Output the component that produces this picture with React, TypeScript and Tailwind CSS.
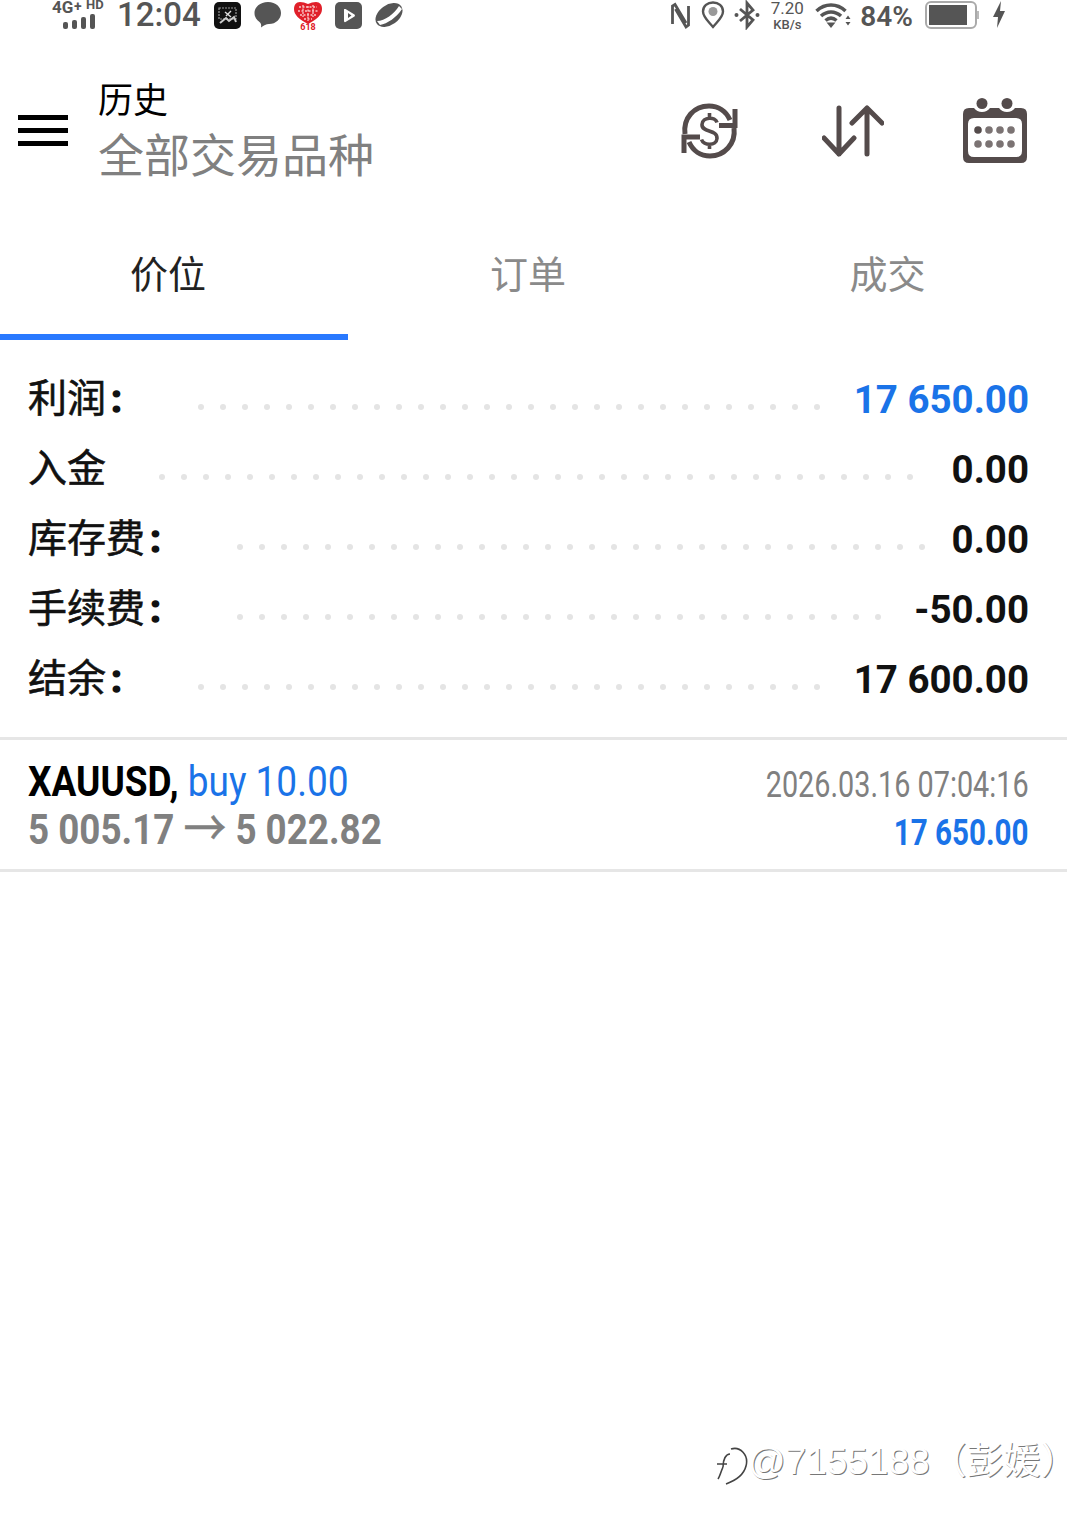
import React from "react";

const cjk = "font-['Roboto','Noto_Sans_CJK_SC',sans-serif]";

const rows = [
  { label: "利润", colon: true, dots: 29, value: "17 650.00", valueCls: "text-[#1a73e8]", label_w: "w-[145px]" },
  { label: "入金", colon: false, dots: 35, value: "0.00", valueCls: "text-[#111]", label_w: "w-[106px]" },
  { label: "库存费", colon: true, dots: 32, value: "0.00", valueCls: "text-[#111]", label_w: "w-[184px]" },
  { label: "手续费", colon: true, dots: 30, value: "-50.00", valueCls: "text-[#111]", label_w: "w-[184px]" },
  { label: "结余", colon: true, dots: 29, value: "17 600.00", valueCls: "text-[#111]", label_w: "w-[145px]" },
];

function StatusLeft() {
  return (
    <div className="flex items-center">
      <div className="relative w-[54px] h-[30px] ml-[52px]">
        <span className="absolute left-0 top-0 text-[17px] leading-[14px] font-bold text-[#555] font-['Roboto',sans-serif]">4G</span>
        <span className="absolute left-[22px] top-0 text-[14px] leading-[12px] font-bold text-[#555] font-['Roboto',sans-serif]">+</span>
        <span className="absolute left-[34px] top-0 text-[13px] leading-[10px] font-bold text-[#555] font-['Roboto',sans-serif]">HD</span>
        <svg className="absolute left-[10px] top-[13px]" width="36" height="17" viewBox="0 0 36 17">
          <rect x="1" y="9" width="5" height="7" rx="2" fill="#555" />
          <rect x="10" y="7" width="5" height="9" rx="2" fill="#555" />
          <rect x="19" y="4" width="5" height="12" rx="2" fill="#555" />
          <rect x="28" y="1" width="5" height="15" rx="2" fill="#555" />
        </svg>
      </div>
      <span className="ml-[11px] text-[33px] leading-[30px] font-medium text-[#555] font-['Roboto',sans-serif]">12:04</span>
      <svg className="ml-[13px]" width="27" height="27" viewBox="0 0 27 27">
        <rect width="27" height="27" rx="5" fill="#111" />
        <rect x="5" y="6" width="17" height="11" fill="none" stroke="#999" strokeWidth="1.2" strokeDasharray="2 1" />
        <path d="M6 21 L12 16 L15 19 L20 15 L22 20" stroke="#ccc" strokeWidth="2" fill="none" />
        <path d="M11 10 L17 15 M17 9 L12 14" stroke="#ddd" strokeWidth="1.4" />
      </svg>
      <svg className="ml-[12px]" width="30" height="28" viewBox="0 0 30 28">
        <path d="M15 1 C23 1 28 6 28 12 C28 18 23 23 16 23 C13 23 11 24.500 8 26.500 C8.500 24 8 22 6.500 21 C3.500 19 1.500 16 1.500 12 C1.500 6 7 1 15 1Z" fill="#555" />
      </svg>
      <svg className="ml-[10px]" width="30" height="29" viewBox="0 0 30 29">
        <path d="M7 1 Q11 1 15 3 Q19 1 23 1 C27 1 29 4 29 8 C29 14 24 18 15 23 C6 18 1 14 1 8 C1 4 3 1 7 1Z" fill="#e0202a" />
        <path d="M6 6 H24 M5 10 H25 M7 14 H23 M11 18 H19 M10 4 V16 M15 5 V20 M20 4 V16" stroke="#f8c8c8" strokeWidth="1.300" strokeDasharray="2 1.500" />
        <text x="15" y="29" textAnchor="middle" fontSize="9" fontWeight="700" fill="#e0202a" fontFamily="Roboto">618</text>
      </svg>
      <svg className="ml-[12px]" width="27" height="27" viewBox="0 0 27 27">
        <rect width="27" height="27" rx="5" fill="#555" />
        <path d="M9.500 7 Q9 6.500 9 8 V19 Q9 20.500 10.500 20 L19.500 14.500 Q20.500 13.500 19.500 12.500 L10.500 7 Z M13 11 L16.500 13.500 L13 16 Z" fill="#fff" fillRule="evenodd" />
      </svg>
      <svg className="ml-[13px]" width="28" height="26" viewBox="0 0 28 26">
        <ellipse cx="14" cy="13" rx="15" ry="10" transform="rotate(-36 14 13)" fill="#555" />
        <path d="M2 19 C10 19 19 12 24 4 L27 7 C22 15 12 22 5 23 Z" fill="#fff" />
      </svg>
    </div>
  );
}

function StatusRight() {
  return (
    <div className="flex items-center mr-[60px]">
      <svg width="22" height="30" viewBox="0 0 22 30">
        <path d="M2.500 24 V6 L5 4.500 L16 23" stroke="#555" strokeWidth="2.800" fill="none" />
        <path d="M18.500 6 V25 L16 27 L5.500 9" stroke="#555" strokeWidth="2.800" fill="none" />
      </svg>
      <svg className="ml-[9px]" width="24" height="30" viewBox="0 0 24 30">
        <path d="M12 27 C7 21 2 17 2 11.500 C2 6 6.500 2.500 12 2.500 C17.500 2.500 22 6 22 11.500 C22 17 17 21 12 27Z" fill="none" stroke="#555" strokeWidth="2.400" />
        <circle cx="12" cy="11.500" r="4.500" fill="#999" />
      </svg>
      <svg className="ml-[9px]" width="26" height="30" viewBox="0 0 26 30">
        <path d="M6 9 L19 20 L13 27 V3 L19 10 L6 21" fill="none" stroke="#555" strokeWidth="2.800" />
        <circle cx="2.500" cy="15" r="2" fill="#555" />
        <circle cx="23.500" cy="15" r="2" fill="#555" />
      </svg>
      <div className="ml-[10px] w-[34px] flex flex-col items-center text-[#555] font-['Roboto',sans-serif]">
        <span className="text-[17px] leading-[17px]">7.20</span>
        <span className="text-[13px] leading-[13px] mt-[1px] font-medium">KB/s</span>
      </div>
      <svg className="ml-[11px]" width="36" height="30" viewBox="0 0 36 30">
        <path d="M1.500 11 C10 3 22 3 30.500 11 M6 16 C12 10.500 20 10.500 26 16 M10.500 20.500 C14 17.500 18 17.500 21.500 20.500" stroke="#555" strokeWidth="3.500" fill="none" />
        <path d="M11.500 22.500 H20.500 L16 28 Z" fill="#555" />
        <path d="M30.500 19 L33 15.500 L35.500 19 Z M30.500 22 H35.500 L33 25.500 Z" fill="#555" />
      </svg>
      <span className="ml-[9px] text-[28px] leading-[30px] font-semibold text-[#555] font-['Roboto',sans-serif] mt-[3px]">84%</span>
      <svg className="ml-[12px]" width="55" height="30" viewBox="0 0 55 30">
        <rect x="1" y="2" width="50" height="26" rx="5" fill="none" stroke="#aaa" strokeWidth="2" />
        <rect x="4" y="5" width="38" height="20" fill="#555" />
        <rect x="52" y="11" width="2" height="8" fill="#bbb" />
      </svg>
      <svg className="ml-[12px]" width="15" height="30" viewBox="0 0 15 30">
        <path d="M9 1 L1 17 H6 L5 28 L13 11 H8 Z" fill="#555" />
      </svg>
    </div>
  );
}

function ExchangeIcon() {
  return (
    <svg className="block -mt-[5px]" width="60" height="60" viewBox="0 0 60 60">
      <path d="M6 33 C4 17 15 5 30 5 C39 5 47 10 51 19" fill="none" stroke="#544b4b" strokeWidth="5" />
      <path d="M55 27 C57 43 45 55 31 55 C22 55 14 50 10 41" fill="none" stroke="#544b4b" strokeWidth="5" />
      <path d="M56 8 V24.500 H40" fill="none" stroke="#544b4b" strokeWidth="5" />
      <path d="M5 52 V36 H21" fill="none" stroke="#544b4b" strokeWidth="5" />
      <path d="M38 21.500 C36.500 15.500 23.500 15.500 23 23.500 C22.500 32 38.500 28 38 37.500 C37.500 45 24.500 45 22.500 38.500 M30.500 12 V17.500 M30.500 42.500 V48" fill="none" stroke="#544b4b" strokeWidth="3.600" />
    </svg>
  );
}

function SortIcon() {
  return (
    <svg className="block -mt-[2px]" width="62" height="54" viewBox="0 0 62 54">
      <path d="M17 4 V50 M2 34 L17 50 L32 34" fill="none" stroke="#544b4b" strokeWidth="5" strokeLinecap="round" strokeLinejoin="round" />
      <path d="M45 50 V4 M30 19 L45 4 L60 19" fill="none" stroke="#544b4b" strokeWidth="5" strokeLinecap="round" strokeLinejoin="round" />
    </svg>
  );
}

function CalendarIcon() {
  return (
    <svg className="block -mt-[8px]" width="64" height="65" viewBox="0 0 64 65">
      <path fillRule="evenodd" d="M6 10 H11 Q14 14 19 14 Q24 14 27 10 H36 Q39 14 44 14 Q49 14 52 10 H58 Q64 10 64 16 V59 Q64 65 58 65 H6 Q0 65 0 59 V16 Q0 10 6 10 Z M11 20 Q5 20 5 26 V53 Q5 59 11 59 H53 Q59 59 59 53 V26 Q59 20 53 20 Z" fill="#544b4b" />
      <circle cx="19" cy="5.500" r="5.500" fill="#544b4b" />
      <circle cx="44" cy="5.500" r="5.500" fill="#544b4b" />
      {[15, 26, 37, 48].map((x, i) => <circle key={x} cx={x} cy="32" r="3.800" fill={i === 0 ? "#544b4b" : "#7b7373"} />)}
      {[15, 26, 37, 48].map((x) => <circle key={x} cx={x} cy="46" r="3.800" fill="#7b7373" />)}
    </svg>
  );
}

export default function App() {
  return (
    <div className={`w-[1067px] h-[1522px] bg-white overflow-hidden relative ${cjk}`}>
      <div className="h-[30px] flex items-center justify-between">
        <StatusLeft />
        <StatusRight />
      </div>

      <header className="h-[170px] flex items-start">
        <div className="ml-[18px] mt-[85px] w-[50px] flex flex-col gap-[8px]">
          <div className="h-[5px] bg-black" />
          <div className="h-[5px] bg-black" />
          <div className="h-[5px] bg-black" />
        </div>
        <div className="ml-[30px] mt-[50px] flex flex-col">
          <span className="text-[35px] leading-[44px] text-black">历史</span>
          <span className="text-[46px] leading-[58px] text-[#808080] mt-[3px]">全部交易品种</span>
        </div>
        <div className="ml-auto mr-[40px] mt-[76px] flex items-start">
          <ExchangeIcon />
          <div className="ml-[83px]"><SortIcon /></div>
          <div className="ml-[79px]"><CalendarIcon /></div>
        </div>
      </header>

      <nav className="h-[140px] flex relative">
        <div className="w-[348px] h-full flex flex-col items-center border-b-[6px] border-[#2979ff] pr-[12px]">
          <span className="text-[38px] leading-[50px] mt-[50px] text-[#222]">价位</span>
        </div>
        <div className="w-[360px] h-full flex flex-col items-center">
          <span className="text-[38px] leading-[50px] mt-[50px] text-[#8a8a8a]">订单</span>
        </div>
        <div className="w-[359px] h-full flex flex-col items-center">
          <span className="text-[38px] leading-[50px] mt-[50px] text-[#8a8a8a]">成交</span>
        </div>
      </nav>

      <section className="pt-[24px] pb-[23px] border-b-[3px] border-[#e6e6e6]">
        {rows.map((r) => (
          <div key={r.label} className="h-[70px] flex items-center pl-[28px] pr-[38px]">
            <span className={`${r.label_w} shrink-0 text-[39px] leading-[50px] text-[#111] whitespace-nowrap [-webkit-text-stroke:0.6px_#111]`}>
              {r.label}
              {r.colon && <span className="ml-[5px] font-bold [-webkit-text-stroke:1.5px_#111]">:</span>}
            </span>
            <span className="flex-1 flex items-center gap-[16px] mt-[15px] ml-[25px]">
              {Array.from({ length: r.dots }).map((_, i) => (
                <i key={i} className="block w-[6px] h-[6px] rounded-full bg-[#e4e4e4]" />
              ))}
            </span>
            <span className={`text-[38.5px] leading-[50px] font-bold mt-[2px] whitespace-nowrap ${r.valueCls}`}>{r.value}</span>
          </div>
        ))}
      </section>

      <section className="h-[132px] border-b-[3px] border-[#e6e6e6] pl-[28px] pr-[38px] flex justify-between">
        <div className="flex flex-col pt-[17px]">
          <div className="h-[48px] text-[43px] leading-[48px] whitespace-nowrap origin-left scale-x-[0.86]">
            <span className="font-bold text-black">XAUUSD,</span>
            <span className="text-[#1a73e8]"> buy 10.00</span>
          </div>
          <div className="h-[48px] text-[43px] leading-[48px] font-bold text-[#808080] whitespace-nowrap origin-left scale-x-[0.855]">
            5 005.17 <span className="font-normal text-[50px] leading-[40px] relative top-[2px] [-webkit-text-stroke:0.5px_#808080]">→</span> 5 022.82
          </div>
        </div>
        <div className="flex flex-col items-end pt-[21px]">
          <div className="h-[48px] text-[36px] leading-[48px] text-[#808080] whitespace-nowrap origin-right scale-x-[0.8]">2026.03.16 07:04:16</div>
          <div className="h-[48px] text-[37px] leading-[48px] font-bold text-[#1a73e8] whitespace-nowrap origin-right scale-x-[0.8]">17 650.00</div>
        </div>
      </section>

      <div className="absolute left-[748px] top-[1434px] text-[37px] leading-[56px] whitespace-nowrap text-white font-['Liberation_Sans','Noto_Sans_CJK_SC',sans-serif] [text-shadow:1px_1px_0_#777]">
        @7155188（彭媛）
      </div>
      <svg className="absolute left-[714px] top-[1446px]" width="36" height="42" viewBox="0 0 36 42">
        <path d="M17 3 C26 0 35 9 32 20 C30 28 23 34 12 38 M9 21 C6 28 6 30 4 33 M3 18 H13 M9 21 C9 13 12 8 16 8" fill="none" stroke="#444" strokeWidth="1.600" />
      </svg>
    </div>
  );
}
